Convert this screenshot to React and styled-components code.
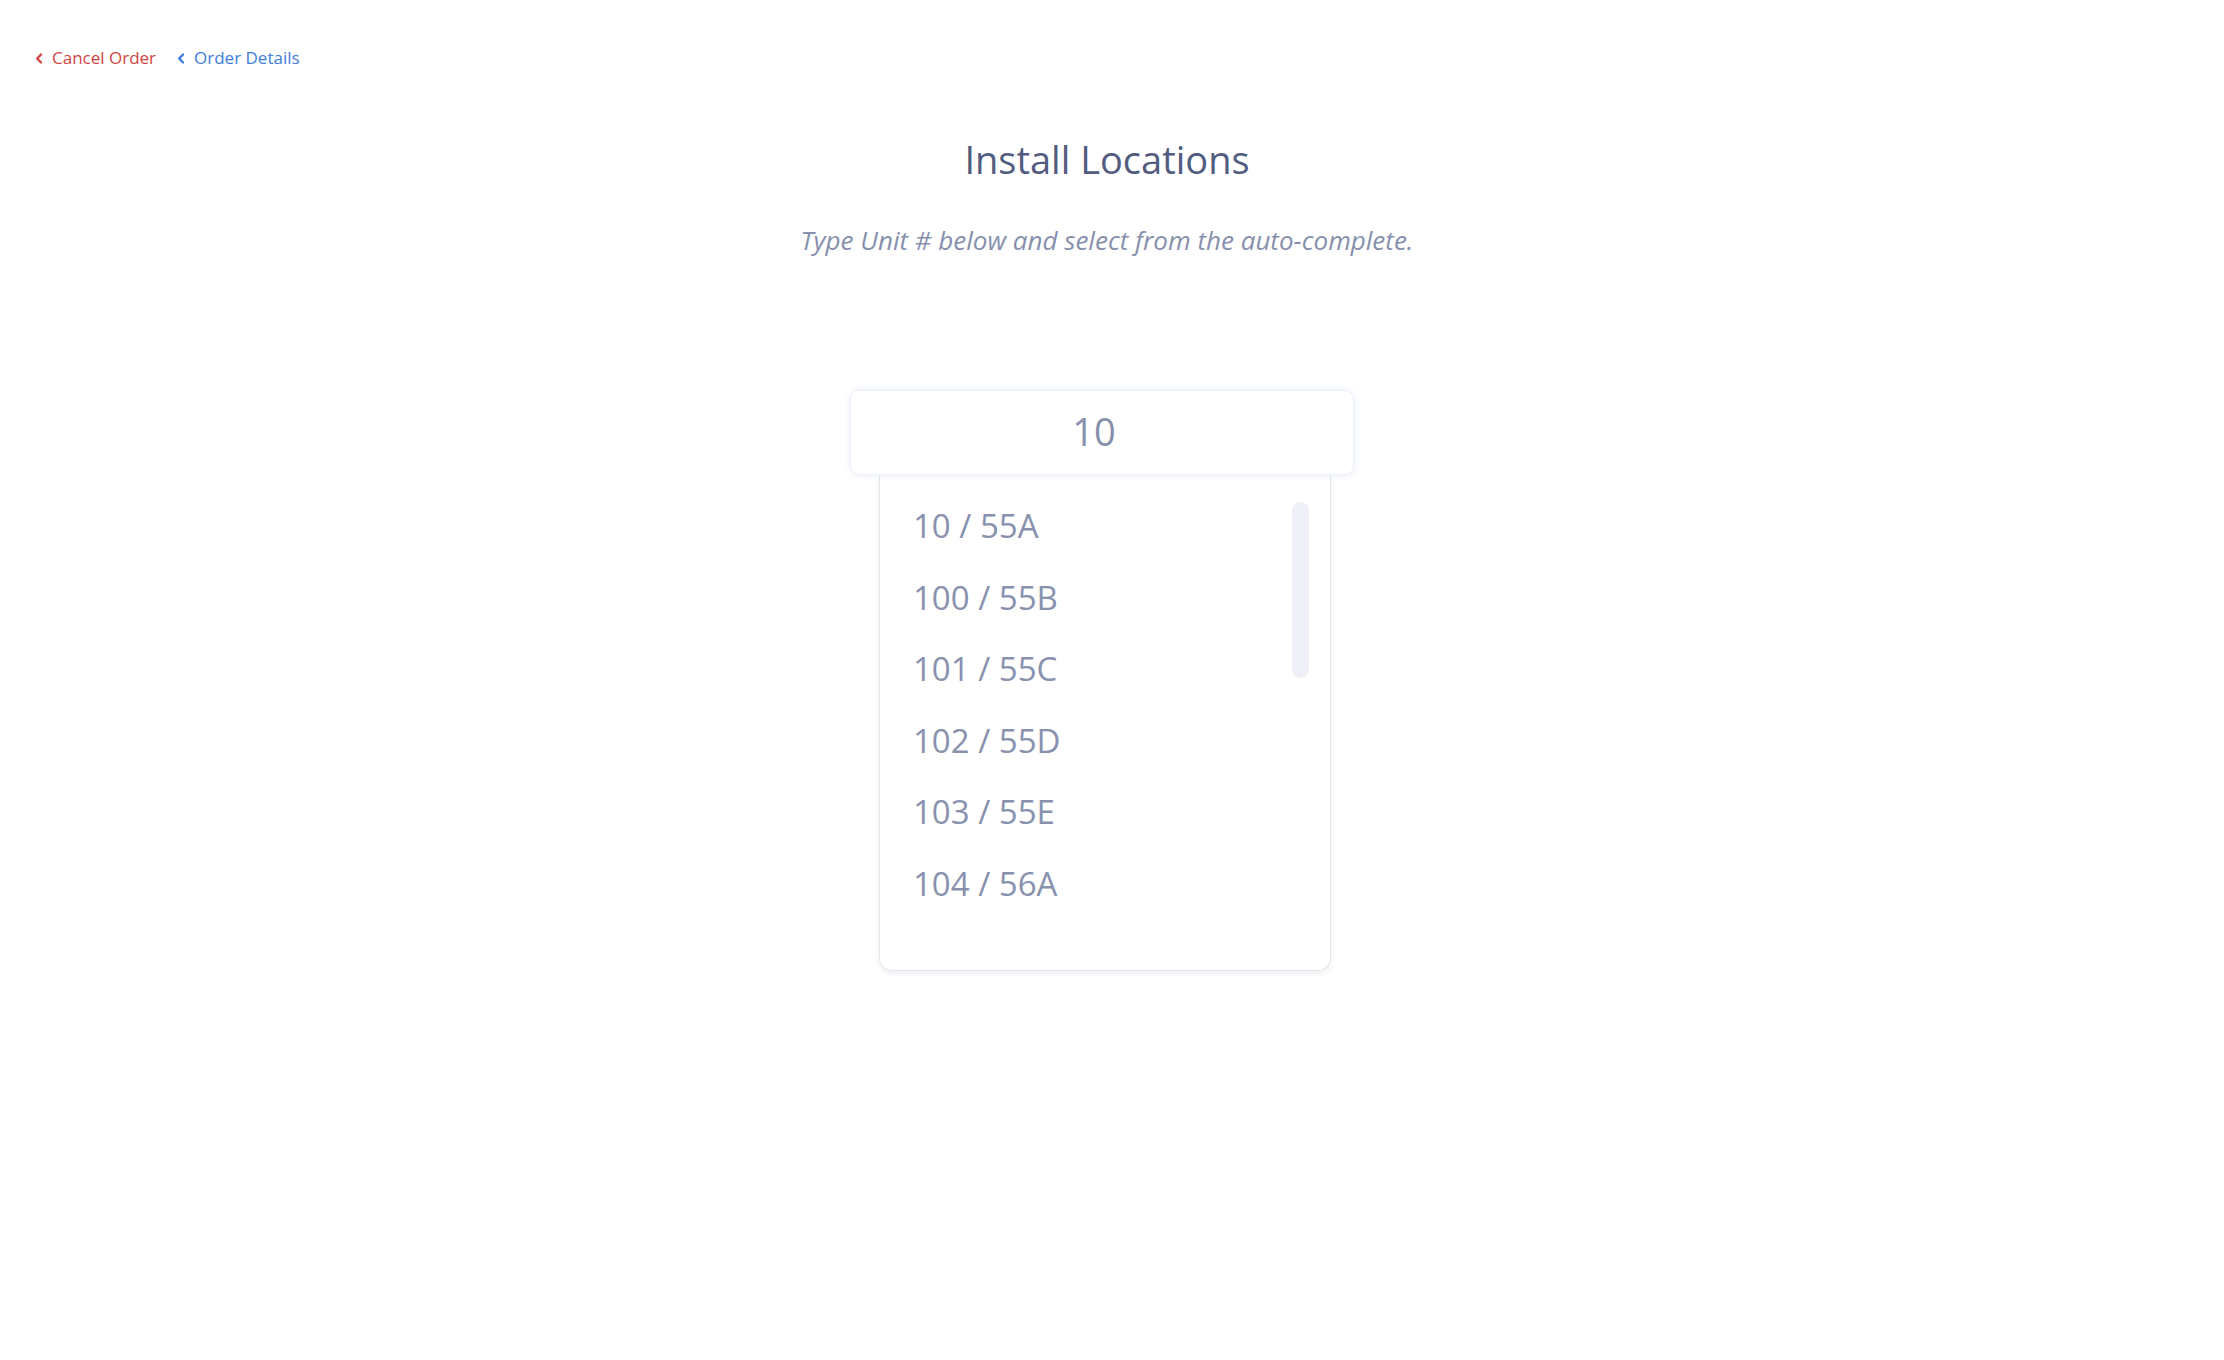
import React from "react";
import styled, { createGlobalStyle } from "styled-components";

const GlobalStyle = createGlobalStyle`
  html, body {
    margin: 0;
    padding: 0;
    background: #ffffff;
  }
  body {
    font-family: "Open Sans", "Noto Sans", "Liberation Sans", sans-serif;
    -webkit-font-smoothing: antialiased;
  }
  * { box-sizing: border-box; }
`;

const Page = styled.div`
  min-height: 1360px;
  background: #ffffff;
`;

const Nav = styled.nav`
  display: flex;
  align-items: center;
  gap: 21px;
  padding: 46px 0 0 35px;
  height: 69px;
`;

const BackLink = styled.a`
  display: inline-flex;
  align-items: center;
  gap: 9px;
  font-size: 17px;
  line-height: 23px;
  color: ${(p) => (p.$tone === "danger" ? "#cf4541" : "#3d7ddc")};
  text-decoration: none;
  cursor: pointer;
`;

const Chevron = styled.svg`
  width: 8px;
  height: 11px;
  flex: none;
  margin-top: 1px;
`;

const Main = styled.main`
  display: flex;
  flex-direction: column;
  align-items: center;
  padding-right: 10px;
`;

const Title = styled.h1`
  margin: 67px 0 0;
  font-size: 38px;
  line-height: 47px;
  font-weight: 400;
  color: #515c7f;
`;

const Subtitle = styled.p`
  margin: 41px 0 0;
  font-size: 26px;
  line-height: 32px;
  font-style: italic;
  color: #8690ad;
`;

const Field = styled.div`
  width: 504px;
  margin: 134px 10px 0 0;
  display: flex;
  flex-direction: column;
`;

const InputBox = styled.div`
  position: relative;
  z-index: 1;
  height: 85px;
  border-radius: 9px;
  background: #ffffff;
  border: 1px solid #edf1f9;
  box-shadow: 0 0 6px rgba(120, 150, 210, 0.18);
  display: flex;
  align-items: flex-start;
`;

const Input = styled.input`
  flex: 1;
  width: 100%;
  border: none;
  outline: none;
  background: transparent;
  text-align: center;
  padding: 0 16px 0 0;
  font-family: inherit;
  font-size: 38px;
  line-height: 80px;
  height: 80px;
  color: #8790ad;
`;

const Dropdown = styled.div`
  position: relative;
  width: 452px;
  margin-left: 29px;
  margin-top: -1px;
  background: #ffffff;
  border: 1px solid #e4e6ef;
  border-top: none;
  border-radius: 0 0 13px 13px;
  box-shadow: 0 3px 5px rgba(40, 50, 90, 0.07);
  padding: 16px 0 51px;
  overflow: hidden;
`;

const OptionList = styled.ul`
  list-style: none;
  margin: 0;
  padding: 0;
`;

const Option = styled.li`
  height: 71.5px;
  line-height: 71.5px;
  padding-left: 33px;
  font-size: 33px;
  color: #8891ae;
  cursor: pointer;
  white-space: nowrap;
`;

const ScrollThumb = styled.div`
  position: absolute;
  top: 28px;
  right: 21px;
  width: 17px;
  height: 176px;
  border-radius: 9px;
  background: #eff0f6;
`;

const ChevronIcon = () => (
  <Chevron viewBox="0 0 8 11" aria-hidden="true">
    <polyline
      points="6,1.5 2.2,5.5 6,9.5"
      fill="none"
      stroke="currentColor"
      strokeWidth="2.4"
      strokeLinecap="round"
      strokeLinejoin="round"
    />
  </Chevron>
);

const options = [
  "10 / 55A",
  "100 / 55B",
  "101 / 55C",
  "102 / 55D",
  "103 / 55E",
  "104 / 56A",
];

export default function App() {
  return (
    <Page>
      <GlobalStyle />
      <Nav>
        <BackLink $tone="danger">
          <ChevronIcon />
          Cancel Order
        </BackLink>
        <BackLink $tone="primary">
          <ChevronIcon />
          Order Details
        </BackLink>
      </Nav>
      <Main>
        <Title>Install Locations</Title>
        <Subtitle>Type Unit # below and select from the auto-complete.</Subtitle>
        <Field>
          <InputBox>
            <Input defaultValue="10" />
          </InputBox>
          <Dropdown>
            <OptionList>
              {options.map((o) => (
                <Option key={o}>{o}</Option>
              ))}
            </OptionList>
            <ScrollThumb />
          </Dropdown>
        </Field>
      </Main>
    </Page>
  );
}
